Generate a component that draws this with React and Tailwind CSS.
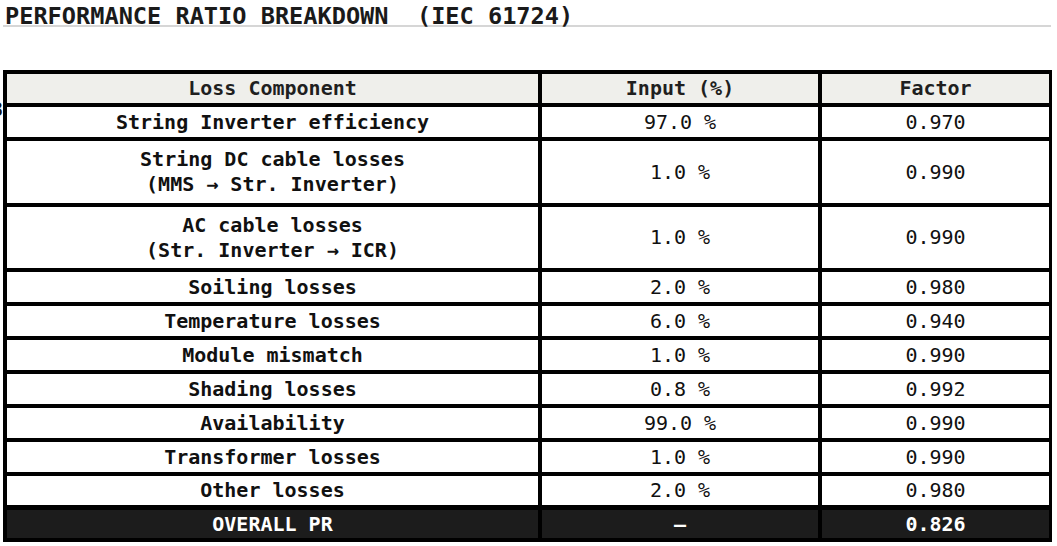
import React from "react";

const rows = [
  { name: ["String Inverter efficiency"], input: "97.0 %", factor: "0.970", h: "h-[30px]" },
  { name: ["String DC cable losses", "(MMS \u2192 Str. Inverter)"], input: "1.0 %", factor: "0.990", h: "h-[62px]" },
  { name: ["AC cable losses", "(Str. Inverter \u2192 ICR)"], input: "1.0 %", factor: "0.990", h: "h-[61px]" },
  { name: ["Soiling losses"], input: "2.0 %", factor: "0.980", h: "h-[30px]" },
  { name: ["Temperature losses"], input: "6.0 %", factor: "0.940", h: "h-[30px]" },
  { name: ["Module mismatch"], input: "1.0 %", factor: "0.990", h: "h-[30px]" },
  { name: ["Shading losses"], input: "0.8 %", factor: "0.992", h: "h-[30px]" },
  { name: ["Availability"], input: "99.0 %", factor: "0.990", h: "h-[30px]" },
  { name: ["Transformer losses"], input: "1.0 %", factor: "0.990", h: "h-[30px]" },
  { name: ["Other losses"], input: "2.0 %", factor: "0.980", h: "h-[29px]" },
];

const mono = { fontFamily: '"DejaVu Sans Mono", "Liberation Mono", monospace' };

export default function App() {
  return (
    <div className="w-[1057px] h-[546px] bg-white overflow-hidden relative text-[#111]" style={mono}>
      <div className="pl-[3px] pr-[6px]">
        <div className="border-b-2 border-[#d6d6d6] pt-[8px]">
          <h1 className="text-[23.6px] leading-[17px] font-bold text-[#1a1a1a] pl-[2px] whitespace-pre">
            PERFORMANCE RATIO BREAKDOWN  (IEC 61724)
          </h1>
        </div>
      </div>

      <span className="absolute left-[-9px] top-[99px] text-[20px] leading-[20px]">8</span>

      <div className="mt-[43px] ml-[3px] w-[1049px] bg-black pt-[4px] pb-[4px] pl-[4px] pr-[3px] flex flex-col gap-[4px] text-[20px] leading-[25px]">
        <div className="grid grid-cols-[531px_276px_227px] gap-x-[4px] h-[29px] ">
          <div className="bg-[#efefeb] flex items-center justify-center font-bold text-[#1f1f1f]">Loss Component</div>
          <div className="bg-[#efefeb] flex items-center justify-center font-bold text-[#1f1f1f]">Input (%)</div>
          <div className="bg-[#efefeb] flex items-center justify-center font-bold text-[#1f1f1f]">Factor</div>
        </div>
        {rows.map((r, i) => (
          <div key={i} className={`grid grid-cols-[531px_276px_227px] gap-x-[4px] ${r.h}`}>
            <div className="bg-white flex flex-col items-center justify-center font-bold text-center">
              {r.name.map((n, j) => (
                <span key={j} className="whitespace-pre">{n}</span>
              ))}
            </div>
            <div className="bg-white flex items-center justify-center">{r.input}</div>
            <div className="bg-white flex items-center justify-center">{r.factor}</div>
          </div>
        ))}
        <div className="grid grid-cols-[531px_276px_227px] gap-x-[4px] h-[28px] mt-[1px]">
          <div className="bg-[#1c1c1c] flex items-center justify-center font-bold text-white">OVERALL PR</div>
          <div className="bg-[#1c1c1c] flex items-center justify-center font-bold text-white">{"\u2014"}</div>
          <div className="bg-[#1c1c1c] flex items-center justify-center font-bold text-white">0.826</div>
        </div>
      </div>
    </div>
  );
}
